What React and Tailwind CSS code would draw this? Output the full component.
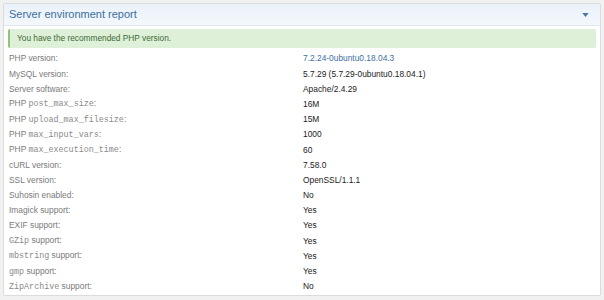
import React from 'react';

const rows = [
    { label: ['PHP version:'], value: '7.2.24-0ubuntu0.18.04.3', link: true },
    { label: ['MySQL version:'], value: '5.7.29 (5.7.29-0ubuntu0.18.04.1)' },
    { label: ['Server software:'], value: 'Apache/2.4.29' },
    { label: ['PHP ', 'post_max_size', ':'], value: '16M' },
    { label: ['PHP ', 'upload_max_filesize', ':'], value: '15M' },
    { label: ['PHP ', 'max_input_vars', ':'], value: '1000' },
    { label: ['PHP ', 'max_execution_time', ':'], value: '60' },
    { label: ['cURL version:'], value: '7.58.0' },
    { label: ['SSL version:'], value: 'OpenSSL/1.1.1' },
    { label: ['Suhosin enabled:'], value: 'No' },
    { label: ['Imagick support:'], value: 'Yes' },
    { label: ['EXIF support:'], value: 'Yes' },
    { label: ['', 'GZip', ' support:'], value: 'Yes' },
    { label: ['', 'mbstring', ' support:'], value: 'Yes' },
    { label: ['', 'gmp', ' support:'], value: 'Yes' },
    { label: ['', 'ZipArchive', ' support:'], value: 'No' },
];

const Label = ({ parts }) => (
    <span>
        {parts[0]}
        {parts[1] && <code className="font-['Liberation_Mono',monospace] text-[8.4px] text-[#8a8a8a]">{parts[1]}</code>}
        {parts[2]}
    </span>
);

const App = () => {
    return (
        <div className="w-[604px] h-[300px] bg-[#f1f1f1] p-[3px] pb-[4px] font-['Liberation_Sans',Arial,sans-serif]">
            <div className="h-full bg-white border border-[#dcdcdc] rounded-[2px] flex flex-col overflow-hidden">
                <div className="h-[22px] flex items-center justify-between pl-[5px] pr-[11px] bg-gradient-to-b from-[#e9f1fa] to-[#f4f8fc] border-b border-[#e2e8ef]">
                    <span className="text-[11px] text-[#3a6fa0]">Server environment report</span>
                    <svg width="7" height="4" viewBox="0 0 8 5">
                        <path d="M0 0 L8 0 L4 5 Z" fill="#4a78a8" />
                    </svg>
                </div>
                <div className="mx-[4px] mt-[3px] h-[19px] flex items-center pl-[7px] bg-[#dff0d8] border-l-2 border-[#8fc47c] rounded-[2px] text-[8.3px] text-[#3c6b34]">
                    You have the recommended PHP version.
                </div>
                <div className="pt-[3px] pl-[5px]">
                    {rows.map((r, i) => (
                        <div key={i} className="h-[15.2px] flex items-center text-[8.4px] leading-none">
                            <div className="w-[294px] text-[#7a7a7a]">
                                <Label parts={r.label} />
                            </div>
                            <div className={r.link ? 'text-[#3d6fa6]' : 'text-[#222]'}>{r.value}</div>
                        </div>
                    ))}
                </div>
            </div>
        </div>
    );
};

export default App;
